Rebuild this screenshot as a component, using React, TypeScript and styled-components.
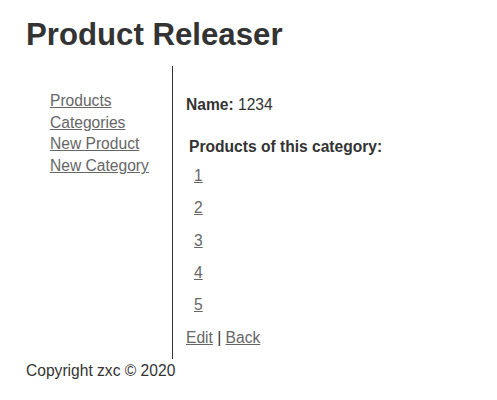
import React from "react";
import styled, { createGlobalStyle } from "styled-components";

const Global = createGlobalStyle`
  html, body { margin: 0; padding: 0; background: #fff; }
  body { font-family: "Liberation Sans", Arial, sans-serif; color: #333; font-size: 15.6px; }
`;

const Page = styled.div`
  padding: 0 26px;
`;

const Title = styled.h1`
  margin: 0;
  padding-top: 16px;
  font-size: 31.2px;
  line-height: 37px;
  font-weight: bold;
  color: #333;
`;

const Main = styled.div`
  display: flex;
  margin-top: 13px;
`;

const Sidebar = styled.nav`
  width: 147px;
  border-right: 1px solid #333;
  display: flex;
  flex-direction: column;
  padding: 24px 0 0 24px;
  box-sizing: border-box;
`;

const NavLink = styled.a`
  color: #666;
  text-decoration: underline;
  line-height: 21.7px;
`;

const Content = styled.section`
  padding: 30px 0 12px 13px;
  display: flex;
  flex-direction: column;
`;

const Field = styled.div`
  line-height: 18px;
`;

const Label = styled.b`
  font-weight: bold;
`;

const SubHeading = styled.h4`
  margin: 24px 0 0 3px;
  font-size: 15.6px;
  line-height: 18px;
  font-weight: bold;
`;

const List = styled.ul`
  list-style: none;
  margin: 11px 0 0 8px;
  padding: 0;
  display: flex;
  flex-direction: column;
  gap: 14.3px;
`;

const Item = styled.li`
  line-height: 18px;
`;

const Link = styled.a`
  color: #666;
  text-decoration: underline;
`;

const Actions = styled.div`
  margin-top: 15px;
  line-height: 18px;
`;

const Footer = styled.footer`
  line-height: 18px;
  padding-top: 3px;
`;

export default function App() {
  return (
    <Page>
      <Global />
      <Title>Product Releaser</Title>
      <Main>
        <Sidebar>
          <NavLink href="#">Products</NavLink>
          <NavLink href="#">Categories</NavLink>
          <NavLink href="#">New Product</NavLink>
          <NavLink href="#">New Category</NavLink>
        </Sidebar>
        <Content>
          <Field>
            <Label>Name:</Label> 1234
          </Field>
          <SubHeading>Products of this category:</SubHeading>
          <List>
            {["1", "2", "3", "4", "5"].map((n) => (
              <Item key={n}>
                <Link href="#">{n}</Link>
              </Item>
            ))}
          </List>
          <Actions>
            <Link href="#">Edit</Link> | <Link href="#">Back</Link>
          </Actions>
        </Content>
      </Main>
      <Footer>Copyright zxc © 2020</Footer>
    </Page>
  );
}
